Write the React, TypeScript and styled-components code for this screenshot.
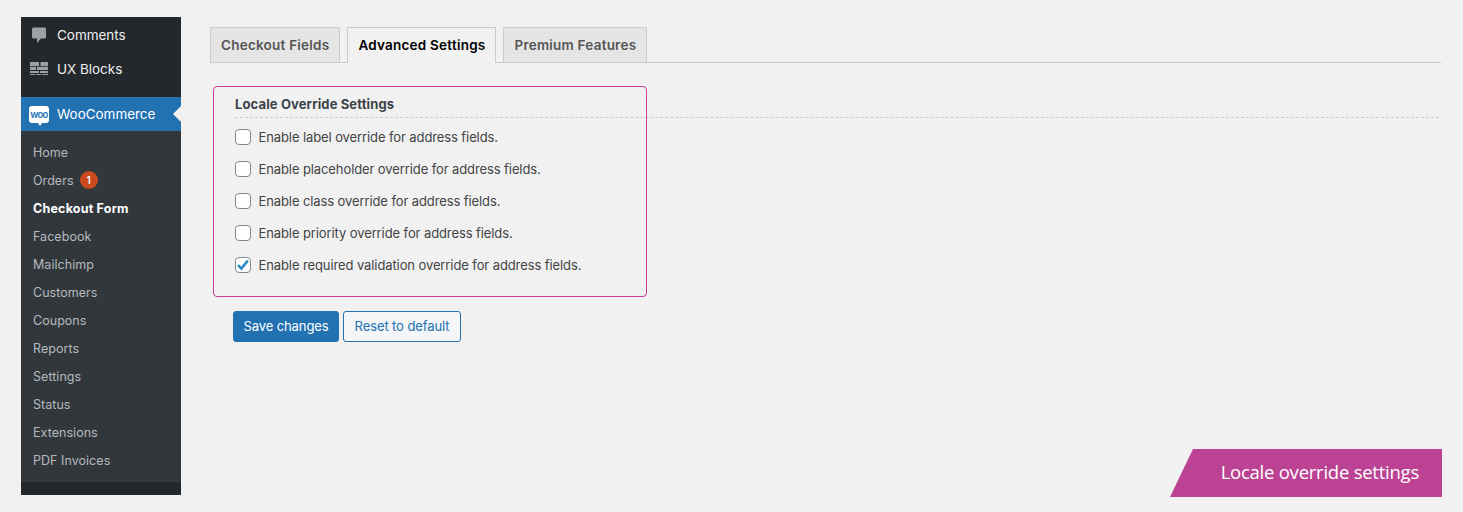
import styled, { createGlobalStyle } from "styled-components";

const adminItems = [
  { id: "comments", label: "Comments", Icon: CommentIcon },
  { id: "ux", label: "UX Blocks", Icon: BlocksIcon },
];

const subItems = [
  "Home",
  "Orders",
  "Checkout Form",
  "Facebook",
  "Mailchimp",
  "Customers",
  "Coupons",
  "Reports",
  "Settings",
  "Status",
  "Extensions",
  "PDF Invoices",
];

const tabs = ["Checkout Fields", "Advanced Settings", "Premium Features"];

const options = [
  { label: "Enable label override for address fields.", checked: false },
  { label: "Enable placeholder override for address fields.", checked: false },
  { label: "Enable class override for address fields.", checked: false },
  { label: "Enable priority override for address fields.", checked: false },
  { label: "Enable required validation override for address fields.", checked: true },
];

function CommentIcon() {
  return (
    <svg width="20" height="20" viewBox="0 0 20 20">
      <path
        d="M4.500 2.500h11A1.500 1.500 0 0 1 17 4v8a1.500 1.500 0 0 1-1.500 1.500H12L8 18v-4.500H4.500A1.500 1.500 0 0 1 3 12V4a1.500 1.500 0 0 1 1.500-1.500z"
        fill="#9ca1a6"
      />
    </svg>
  );
}

function BlocksIcon() {
  return (
    <svg width="18" height="14" viewBox="0 0 18 14" fill="#9ca1a6">
      <path d="M0 0h9v4H0zM10.500 0H18v4h-7.500zM0 4.800h6V8H0zM7 4.800h11V8H7zM0 9h9v2H0zM10 9h8v2h-8zM0 12h5v1H0zM6 12h5v1H6zM12 12h6v1h-6z" />
    </svg>
  );
}

export default function App() {
  return (
    <Page>
      <GlobalStyle />
      <Sidebar>
        <TopMenu>
          {adminItems.map(({ id, label, Icon }) => (
            <TopItem key={id}>
              <IconSlot>
                <Icon />
              </IconSlot>
              {label}
            </TopItem>
          ))}
        </TopMenu>
        <ActiveItem>
          <WooBadge>
            <span>woo</span>
          </WooBadge>
          WooCommerce
        </ActiveItem>
        <SubMenu>
          {subItems.map((item) => (
            <SubItem key={item} $current={item === "Checkout Form"}>
              {item}
              {item === "Orders" && <Count>1</Count>}
            </SubItem>
          ))}
        </SubMenu>
      </Sidebar>
      <Main>
        <TabBar>
          {tabs.map((tab) => (
            <Tab key={tab} $active={tab === "Advanced Settings"}>
              {tab}
            </Tab>
          ))}
        </TabBar>
        <Section>
          <Highlight />
          <SectionTitle>Locale Override Settings</SectionTitle>
          <OptionList>
            {options.map((o) => (
              <Option key={o.label}>
                <CheckBox>
                  {o.checked && (
                    <svg width="14" height="14" viewBox="0 0 14 14">
                      <path d="M2 7.200 5.400 10.600 11.800 2.600" fill="none" stroke="#2a8bc6" strokeWidth="2.600" />
                    </svg>
                  )}
                </CheckBox>
                {o.label}
              </Option>
            ))}
          </OptionList>
        </Section>
        <Actions>
          <PrimaryButton>Save changes</PrimaryButton>
          <SecondaryButton>Reset to default</SecondaryButton>
        </Actions>
      </Main>
      <Banner>Locale override settings</Banner>
    </Page>
  );
}

// styling
const GlobalStyle = createGlobalStyle`
  html, body {
    margin: 0;
    background: #f1f1f1;
  }
  body {
    font-family: Inter, "Liberation Sans", sans-serif;
    font-size: 13px;
    color: #444;
  }
`;

const Page = styled.div`
  position: relative;
  display: flex;
  align-items: flex-start;
  width: 1463px;
  height: 512px;
  padding: 17px 0 0 21px;
  box-sizing: border-box;
  overflow: hidden;
`;

const Sidebar = styled.nav`
  flex: none;
  width: 160px;
  height: 478px;
  background: #23282d;
  color: #eee;
`;

const TopMenu = styled.div`
  display: flex;
  flex-direction: column;
  height: 80px;
  padding-top: 1px;
  box-sizing: border-box;
`;

const TopItem = styled.div`
  display: flex;
  align-items: center;
  height: 34px;
  font-size: 13.5px;
  letter-spacing: -0.03px;
`;

const IconSlot = styled.span`
  display: flex;
  justify-content: center;
  width: 36px;
`;

const ActiveItem = styled.div`
  position: relative;
  display: flex;
  align-items: center;
  height: 34px;
  padding-left: 8px;
  background: #2271b1;
  color: #fff;
  font-size: 13.5px;
  letter-spacing: -0.03px;
  &::after {
    content: "";
    position: absolute;
    right: 0;
    top: 9px;
    border: 8px solid transparent;
    border-right-color: #f1f1f1;
    border-left-width: 0;
  }
`;

const WooBadge = styled.span`
  position: relative;
  display: flex;
  align-items: center;
  justify-content: center;
  width: 20px;
  height: 17px;
  margin-right: 8px;
  background: #fff;
  border-radius: 3px;
  color: #2271b1;
  font-size: 9.500px;
  font-weight: 600;
  letter-spacing: -0.6px;
  &::after {
    content: "";
    position: absolute;
    bottom: -3px;
    left: 9px;
    border: 2px solid transparent;
    border-top-color: #fff;
    border-bottom-width: 0;
    border-top-width: 3px;
  }
`;

const SubMenu = styled.ul`
  list-style: none;
  margin: 0;
  padding: 7px 0;
  height: 351px;
  box-sizing: border-box;
  background: #32373c;
`;

const SubItem = styled.li<{ $current: boolean }>`
  display: flex;
  align-items: center;
  height: 28px;
  padding-left: 12px;
  color: ${(p) => (p.$current ? "#fff" : "#b4b9be")};
  font-weight: ${(p) => (p.$current ? 700 : 400)};
  font-size: 12.5px;
  letter-spacing: ${(p) => (p.$current ? "0.2px" : "0.04px")};
`;

const Count = styled.span`
  display: inline-flex;
  align-items: center;
  justify-content: center;
  width: 18px;
  height: 18px;
  margin-left: 6px;
  border-radius: 50%;
  background: #ca4a1f;
  color: #fff;
  font-size: 10px;
  font-weight: 600;
`;

const Main = styled.main`
  flex: none;
  width: 1231px;
  margin-left: 29px;
  padding-top: 10px;
`;

const TabBar = styled.div`
  display: flex;
  gap: 7px;
  height: 36px;
  box-sizing: border-box;
  border-bottom: 1px solid #ccc;
`;

const Tab = styled.div<{ $active: boolean }>`
  display: flex;
  align-items: center;
  padding: ${(p) => (p.$active ? "0 10px 1px" : "0 10px")};
  height: ${(p) => (p.$active ? 36 : 35)}px;
  box-sizing: border-box;
  border: 1px solid #ccc;
  border-bottom: 0;
  background: ${(p) => (p.$active ? "#f1f1f1" : "#e5e5e5")};
  color: ${(p) => (p.$active ? "#000" : "#555")};
  font-size: 13.5px;
  font-weight: 600;
  letter-spacing: 0.23px;
`;

const Section = styled.section`
  position: relative;
  margin: 0 2px 0 25px;
  padding-top: 31px;
`;

const Highlight = styled.div`
  position: absolute;
  left: -22px;
  top: 23px;
  width: 434px;
  height: 211px;
  box-sizing: border-box;
  border: 1px solid #c83c9c;
  border-radius: 4px;
`;

const SectionTitle = styled.h3`
  margin: 0;
  height: 24px;
  padding-top: 2px;
  box-sizing: border-box;
  border-bottom: 1px dashed #ccc;
  color: #3c434a;
  font-size: 13px;
  font-weight: 700;
  line-height: 16px;
  letter-spacing: 0.13px;
`;

const OptionList = styled.div`
  display: flex;
  flex-direction: column;
  padding-top: 3px;
`;

const Option = styled.label`
  display: flex;
  align-items: center;
  height: 32px;
  font-size: 13px;
  letter-spacing: -0.1px;
`;

const CheckBox = styled.span`
  flex: none;
  display: flex;
  align-items: center;
  justify-content: center;
  width: 16px;
  height: 16px;
  box-sizing: border-box;
  margin-right: 7.500px;
  border: 1px solid #7e8993;
  border-radius: 4px;
  background: #fff;
`;

const Actions = styled.div`
  display: flex;
  gap: 4px;
  margin: 30px 0 0 23px;
`;

const PrimaryButton = styled.button`
  height: 31px;
  width: 106px;
  padding: 0 0 1px;
  border: 1px solid #2271b1;
  border-radius: 3px;
  background: #2271b1;
  color: #fff;
  font: inherit;
  letter-spacing: -0.1px;
`;

const SecondaryButton = styled(PrimaryButton)`
  width: 118px;
  background: #f3f5f6;
  color: #2271b1;
`;

const Banner = styled.div`
  position: absolute;
  right: 21px;
  bottom: 15px;
  display: flex;
  align-items: center;
  justify-content: flex-end;
  width: 272px;
  height: 48px;
  padding: 0 23px 3px 0;
  box-sizing: border-box;
  background: #bc4293;
  clip-path: polygon(23px 0, 100% 0, 100% 100%, 0 100%);
  color: #fff;
  font-family: "Open Sans", sans-serif;
  font-size: 18.500px;
  letter-spacing: -0.24px;
`;
